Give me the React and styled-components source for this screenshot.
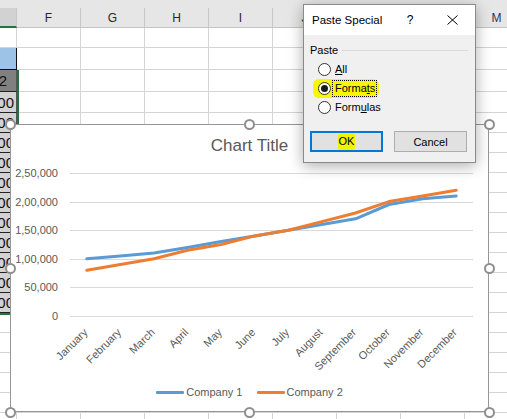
import React from 'react';
import styled, { createGlobalStyle } from 'styled-components';

const GlobalStyle = createGlobalStyle`
  html, body { margin: 0; padding: 0; background: #fff; overflow: hidden; }
  body { font-family: "Liberation Sans", Arial, sans-serif; }
  * { box-sizing: border-box; }
`;

const Screen = styled.div`
  position: relative;
  width: 507px;
  height: 419px;
  overflow: hidden;
  background: #fff;
`;

/* ---------------- Spreadsheet ---------------- */
const Sheet = styled.div`
  display: grid;
  grid-template-columns: 17px repeat(8, 64px);
  grid-template-rows: 8px 20px 20px 22px 22px 21px repeat(16, 20px);
  background: #fff;
`;

const TopStrip = styled.div`
  grid-column: 1 / -1;
  background: #e6e6e6;
`;

const ColHead = styled.div`
  display: flex;
  align-items: center;
  justify-content: center;
  background: ${p => (p.$selected ? '#d2d2d2' : '#e6e6e6')};
  border-right: 1px solid #c8c8c8;
  border-bottom: ${p => (p.$selected ? '2px solid #217346' : '1px solid #c4c4c4')};
  font-size: 12px;
  color: ${p => p.$tint || '#262626'};
`;

const Cell = styled.div`
  border-right: 1px solid #d4d4d4;
  border-bottom: 1px solid #d4d4d4;
`;

const ECell = styled.div`
  display: flex;
  align-items: center;
  justify-content: flex-end;
  overflow: hidden;
  white-space: nowrap;
  padding-right: ${p => p.$pad}px;
  font-size: 15px;
  color: #111;
  background: ${p => p.$fill};
  border-right: ${p => p.$edge};
  border-bottom: ${p => p.$bottom};
  box-shadow: ${p => p.$shadow || 'none'};
  position: relative;
  z-index: ${p => (p.$shadow ? 1 : 0)};
`;

const ECELL = {
  plain: { fill: 'transparent', edge: '1px solid #d4d4d4', bottom: '1px solid #d4d4d4', pad: 2 },
  blue: { fill: '#9dc3e6', edge: '1px solid #111', bottom: '1px solid #111', pad: 2 },
  dark: { fill: '#808080', edge: '1px solid #555', bottom: '1px solid #222', pad: 9 },
  gray: { fill: '#d2d2d2', edge: '1px solid #555', bottom: '1px solid #222', pad: 2 },
};

const COLS = ['E', 'F', 'G', 'H', 'I', 'J', 'K', 'L', 'M'];
const E_VALUES = ['80,000', '90,000', '1,00,000', '1,15,000', '1,25,000', '1,40,000', '1,50,000', '1,65,000', '1,80,000', '2,00,000', '2,10,000'];
const ROW_COUNT = 21;

function eKind(r) {
  if (r === 2) return 'blue';
  if (r === 3) return 'dark';
  if (r >= 4 && r <= 14) return 'gray';
  return 'plain';
}

function eText(r) {
  if (r === 3) return 'Company 2';
  if (r >= 4 && r <= 14) return E_VALUES[r - 4];
  return '';
}

function eShadow(r) {
  if (r >= 3 && r < 14) return '2px 0 0 #217346';
  if (r === 14) return '2px 0 0 #217346, 0 2px 0 #217346, 2px 2px 0 #217346';
  return undefined;
}

function SheetGrid() {
  const rows = [];
  for (let r = 1; r <= ROW_COUNT; r++) {
    COLS.forEach((c, ci) => {
      if (ci === 0) {
        const k = ECELL[eKind(r)];
        rows.push(
          <ECell key={`${c}${r}`} $fill={k.fill} $edge={k.edge} $bottom={k.bottom} $pad={k.pad} $shadow={eShadow(r)}>
            {eText(r)}
          </ECell>
        );
      } else {
        rows.push(<Cell key={`${c}${r}`} />);
      }
    });
  }
  return (
    <Sheet>
      <TopStrip />
      {COLS.map((c, i) => (
        <ColHead key={c} $selected={i === 0} $tint={c === 'M' ? '#1f3864' : undefined}>
          {i === 0 ? '' : c}
        </ColHead>
      ))}
      {rows}
    </Sheet>
  );
}

/* ---------------- Chart ---------------- */
const ChartFrame = styled.div`
  position: absolute;
  left: 10px;
  top: 124px;
  width: 479px;
  height: 288px;
  border: 1px solid #969696;
  background: #fff;
  display: flex;
  flex-direction: column;
  z-index: 2;
`;

const ChartTitle = styled.div`
  padding-top: 11px;
  height: 40px;
  line-height: 20px;
  text-align: center;
  font-size: 17px;
  color: #595959;
`;

const Plot = styled.svg`
  display: block;
  flex: none;
`;

const Legend = styled.div`
  flex: 1;
  display: flex;
  align-items: center;
  justify-content: center;
  gap: 14px;
  padding-bottom: 2px;
`;

const LegendItem = styled.div`
  display: flex;
  align-items: center;
  gap: 2px;
  font-size: 11px;
  color: #595959;
`;

const Swatch = styled.span`
  display: block;
  width: 28px;
  height: 3px;
  border-radius: 1px;
  background: ${p => p.$color};
`;

const HandleLayer = styled.div`
  position: absolute;
  inset: -1px;
  pointer-events: none;
`;

const Handle = styled.span`
  position: absolute;
  left: calc(${p => p.$x} - 5.5px);
  top: calc(${p => p.$y} - 5.5px);
  width: 11px;
  height: 11px;
  border-radius: 50%;
  border: 2px solid #8f8f8f;
  background: #fff;
`;

const MONTHS = ['January', 'February', 'March', 'April', 'May', 'June', 'July', 'August', 'September', 'October', 'November', 'December'];
const C1 = [100000, 105000, 110000, 120000, 130000, 140000, 150000, 160000, 170000, 195000, 205000, 210000];
const C2 = [80000, 90000, 100000, 115000, 125000, 140000, 150000, 165000, 180000, 200000, 210000, 220000];
const TICKS = [250000, 200000, 150000, 100000, 50000, 0];
const TICK_LABELS = ['2,50,000', '2,00,000', '1,50,000', '1,00,000', '50,000', '0'];

const X0 = 70;
const X1 = 473;
const Y0 = 316;
const YTOP = 173;
const STEP = (X1 - X0) / 12;
const xAt = i => X0 + STEP * (i + 0.5);
const yAt = v => Y0 - (v / 250000) * (Y0 - YTOP);
const pts = arr => arr.map((v, i) => `${xAt(i).toFixed(1)},${yAt(v).toFixed(1)}`).join(' ');

function ChartPlot() {
  return (
    <Plot width="477" height="210" viewBox="11 165 477 210">
      {TICKS.map(t => {
        const y = Math.round(yAt(t)) + 0.5;
        return <line key={t} x1={X0} x2={X1} y1={y} y2={y} stroke="#d9d9d9" strokeWidth="1" />;
      })}
      {TICKS.map((t, i) => (
        <text key={`l${t}`} x="58" y={yAt(t) + 4} textAnchor="end" fontSize="11" fill="#595959" fontFamily="Liberation Sans, Arial, sans-serif">
          {TICK_LABELS[i]}
        </text>
      ))}
      <polyline points={pts(C1)} fill="none" stroke="#5b9bd5" strokeWidth="3" strokeLinejoin="round" strokeLinecap="round" />
      <polyline points={pts(C2)} fill="none" stroke="#ed7d31" strokeWidth="3" strokeLinejoin="round" strokeLinecap="round" />
      {MONTHS.map((m, i) => {
        const ax = xAt(i) + 1.5;
        const ay = 333;
        return (
          <text key={m} x={ax} y={ay} textAnchor="end" fontSize="11" fill="#595959" fontFamily="Liberation Sans, Arial, sans-serif" transform={`rotate(-45 ${ax} ${ay})`}>
            {m}
          </text>
        );
      })}
    </Plot>
  );
}

function Chart() {
  const handles = [
    ['0%', '0%'], ['50%', '0%'], ['100%', '0%'],
    ['0%', '50%'], ['100%', '50%'],
    ['0%', '100%'], ['50%', '100%'], ['100%', '100%'],
  ];
  return (
    <ChartFrame>
      <ChartTitle>Chart Title</ChartTitle>
      <ChartPlot />
      <Legend>
        <LegendItem><Swatch $color="#5b9bd5" />Company 1</LegendItem>
        <LegendItem><Swatch $color="#ed7d31" />Company 2</LegendItem>
      </Legend>
      <HandleLayer>
        {handles.map(([x, y]) => <Handle key={x + y} $x={x} $y={y} />)}
      </HandleLayer>
    </ChartFrame>
  );
}

/* ---------------- Dialog ---------------- */
const Dialog = styled.div`
  position: absolute;
  left: 303px;
  top: 4px;
  width: 173px;
  height: 159px;
  border: 1px solid #8a8a8a;
  background: #f0f0f0;
  box-shadow: 0 3px 14px rgba(0, 0, 0, 0.32);
  display: flex;
  flex-direction: column;
  z-index: 5;
  color: #000;
`;

const TitleBar = styled.div`
  height: 30px;
  background: #fff;
  display: flex;
  align-items: center;
`;

const TitleText = styled.div`
  flex: 1;
  min-width: 0;
  padding-left: 8px;
  font-size: 11.5px;
  color: #000;
  white-space: nowrap;
`;

const CaptionButton = styled.div`
  flex: none;
  width: 46px;
  height: 30px;
  display: flex;
  align-items: center;
  justify-content: center;
  font-size: 12px;
  color: #000;
`;

const HelpButton = styled(CaptionButton)`
  width: 40px;
  padding-left: 2px;
`;

const Body = styled.div`
  flex: 1;
  padding: 8px 7px 0 6px;
  display: flex;
  flex-direction: column;
`;

const GroupHead = styled.div`
  display: flex;
  align-items: center;
  height: 14px;
  font-size: 11px;
`;

const GroupRule = styled.span`
  flex: 1;
  height: 1px;
  margin-left: 4px;
  background: #d9d9d9;
`;

const RadioList = styled.div`
  margin-top: 3px;
  display: flex;
  flex-direction: column;
  align-items: flex-start;
`;

const RadioRow = styled.div`
  display: inline-flex;
  align-items: center;
  height: 19px;
  margin-left: 3px;
  padding: 1px 2px 1px 5px;
  border-radius: 6px;
  background: ${p => (p.$marked ? '#f7f700' : 'transparent')};
  font-size: 11px;
`;

const RadioCircle = styled.span`
  position: relative;
  width: 13px;
  height: 13px;
  border-radius: 50%;
  border: 1px solid #333;
  background: #fff;
  display: flex;
  align-items: center;
  justify-content: center;
  &::after {
    content: '';
    display: ${p => (p.$on ? 'block' : 'none')};
    width: 7px;
    height: 7px;
    border-radius: 50%;
    background: #1a1a1a;
  }
`;

const RadioLabel = styled.span`
  margin-left: 1px;
  padding: 0 1px 0 2px;
  line-height: 15px;
  border: 1px dotted ${p => (p.$focus ? '#000' : 'transparent')};
`;

const Key = styled.u`
  text-decoration: underline;
  text-underline-offset: 1px;
`;

const ButtonRow = styled.div`
  margin-top: 14px;
  display: flex;
  gap: 11px;
`;

const DlgButton = styled.div`
  width: 73px;
  height: 21px;
  display: flex;
  align-items: center;
  justify-content: center;
  background: #e1e1e1;
  border: ${p => (p.$default ? '2px solid #0078d7' : '1px solid #adadad')};
  font-size: 11px;
  color: #000;
`;

const Marked = styled.span`
  background: #f2f200;
  padding: 0 1px;
  line-height: 17px;
  border-radius: 2px;
`;

function CloseIcon() {
  return (
    <svg width="11" height="10" viewBox="0 0 11 10">
      <path d="M0.5 0.5 L10.5 9.5 M10.5 0.5 L0.5 9.5" stroke="#000" strokeWidth="1" fill="none" />
    </svg>
  );
}

function PasteSpecial() {
  return (
    <Dialog>
      <TitleBar>
        <TitleText>Paste Special</TitleText>
        <HelpButton>?</HelpButton>
        <CaptionButton><CloseIcon /></CaptionButton>
      </TitleBar>
      <Body>
        <GroupHead>Paste<GroupRule /></GroupHead>
        <RadioList>
          <RadioRow>
            <RadioCircle />
            <RadioLabel><Key>A</Key>ll</RadioLabel>
          </RadioRow>
          <RadioRow $marked>
            <RadioCircle $on />
            <RadioLabel $focus>Forma<Key>t</Key>s</RadioLabel>
          </RadioRow>
          <RadioRow>
            <RadioCircle />
            <RadioLabel>Form<Key>u</Key>las</RadioLabel>
          </RadioRow>
        </RadioList>
        <ButtonRow>
          <DlgButton $default><Marked>OK</Marked></DlgButton>
          <DlgButton>Cancel</DlgButton>
        </ButtonRow>
      </Body>
    </Dialog>
  );
}

export default function App() {
  return (
    <Screen>
      <GlobalStyle />
      <SheetGrid />
      <Chart />
      <PasteSpecial />
    </Screen>
  );
}
